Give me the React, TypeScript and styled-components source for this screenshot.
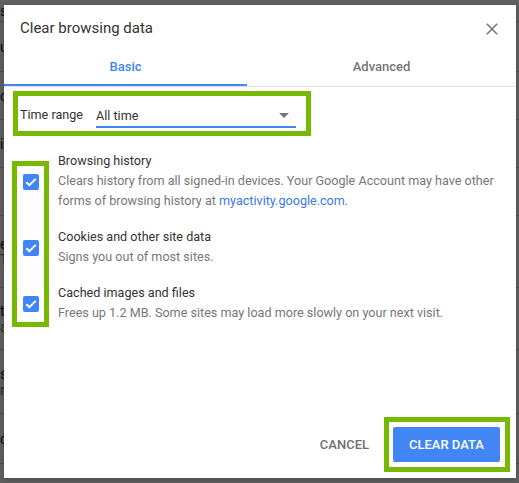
import React from "react";
import styled, { createGlobalStyle } from "styled-components";

const Global = createGlobalStyle`
  html, body { margin: 0; padding: 0; }
  body { background: #5c5c5c; font-family: Roboto, "Liberation Sans", Arial, sans-serif; }
`;

const Page = styled.div`
  position: relative;
  width: 519px;
  height: 483px;
  overflow: hidden;
  background: #fff;
`;

const Underlay = styled.div`
  display: flex;
  flex-direction: column;
`;

const UnderRow = styled.div<{ $h: number; $line?: boolean }>`
  height: ${(p) => p.$h}px;
  font-size: 14px;
  line-height: 16px;
  color: #222;
  display: flex;
  flex-direction: column;
  justify-content: center;
  border-bottom: ${(p) => (p.$line ? "1px solid #c8c8c8" : "none")};
  box-sizing: border-box;
  white-space: nowrap;
`;

const UnderSub = styled.span`
  color: #777;
`;

const Scrim = styled.div`
  position: absolute;
  inset: 0;
  background: rgba(0, 0, 0, 0.62);
`;

const Dialog = styled.div`
  position: absolute;
  left: 4px;
  top: 5px;
  width: 512px;
  height: 473px;
  background: #fff;
  display: flex;
  flex-direction: column;
  box-shadow: 0 2px 6px rgba(0, 0, 0, 0.25);
`;

const Header = styled.div`
  display: flex;
  align-items: center;
  justify-content: space-between;
  padding: 13px 16px 0 16px;
  height: 20px;
`;

const Title = styled.h1`
  margin: 0;
  font-size: 15px;
  line-height: 20px;
  font-weight: 400;
  color: #333;
`;

const CloseButton = styled.button`
  border: 0;
  background: none;
  padding: 0;
  width: 14px;
  height: 14px;
  display: flex;
  align-items: center;
  justify-content: center;
  margin-top: 2px;
  margin-right: 1px;
  cursor: pointer;
`;

const TabBar = styled.div`
  margin-top: 7px;
  display: grid;
  grid-template-columns: 243px 1fr;
  border-bottom: 1px solid #e2e2e2;
`;

const Tab = styled.div<{ $active?: boolean }>`
  height: 41px;
  box-sizing: border-box;
  padding-top: 4px;
  display: flex;
  align-items: center;
  justify-content: center;
  font-size: 13px;
  font-weight: 500;
  color: ${(p) => (p.$active ? "#4285f4" : "#757575")};
  border-bottom: 2px solid ${(p) => (p.$active ? "#4285f4" : "transparent")};
`;

const Body = styled.div`
  display: flex;
  flex-direction: column;
  padding-left: 8px;
`;

const Highlight = styled.div`
  border: 5px solid #76b900;
  box-sizing: border-box;
`;

const RangeBox = styled(Highlight)`
  margin-top: 4px;
  margin-left: 1px;
  width: 298px;
  height: 45px;
  display: flex;
  align-items: flex-end;
  padding: 0 10px 3px 2px;
`;

const RangeLabel = styled.span`
  font-size: 12.6px;
  line-height: 22px;
  margin-bottom: 2px;
  color: #333;
  white-space: nowrap;
`;

const Select = styled.div`
  margin-left: auto;
  width: 200px;
  height: 24px;
  box-sizing: border-box;
  border-bottom: 2px solid #4285f4;
  display: flex;
  align-items: center;
  justify-content: space-between;
  padding-right: 7px;
  font-size: 12.6px;
  color: #333;
`;

const Arrow = styled.span`
  width: 0;
  height: 0;
  border-left: 5px solid transparent;
  border-right: 5px solid transparent;
  border-top: 5px solid #757575;
`;

const Options = styled.div`
  margin-top: 15px;
  display: grid;
  grid-template-columns: 37px 1fr;
  column-gap: 9px;
  row-gap: 16px;
`;

const OptionsFrame = styled(Highlight)`
  grid-column: 1;
  grid-row: 1 / 4;
  margin-top: 10px;
  margin-bottom: -4px;
`;

const CheckBox = styled.span<{ $row: number }>`
  grid-column: 1;
  grid-row: ${(p) => p.$row};
  align-self: center;
  justify-self: center;
  margin-top: 1px;
  width: 16px;
  height: 16px;
  border-radius: 2px;
  background: #4285f4;
  display: flex;
  align-items: center;
  justify-content: center;
`;

const OptionText = styled.div<{ $row: number }>`
  grid-column: 2;
  grid-row: ${(p) => p.$row};
  font-size: 12.6px;
  line-height: 20px;
  padding-right: 12px;
`;

const OptionTitle = styled.div`
  color: #333;
`;

const OptionDesc = styled.div`
  color: #777;
`;

const Link = styled.a`
  color: #3b78e7;
  text-decoration: none;
`;

const Footer = styled.div`
  margin-top: auto;
  display: flex;
  justify-content: flex-end;
  align-items: center;
  padding: 0 6px 6px 0;
`;

const TextButton = styled.button`
  border: 0;
  background: none;
  font-family: inherit;
  font-size: 13px;
  font-weight: 500;
  color: #6f6f6f;
  padding: 0 15px;
  height: 35px;
`;

const ButtonFrame = styled(Highlight)`
  padding: 5px 5px 5px 4px;
`;

const PrimaryButton = styled.button`
  border: 0;
  border-radius: 2px;
  background: #4285f4;
  color: #fff;
  font-family: inherit;
  font-size: 13px;
  font-weight: 500;
  height: 35px;
  width: 107px;
  padding: 0;
`;

const Check = () => (
  <svg width="12" height="10" viewBox="0 0 12 10">
    <path d="M1.3 5.2 L4.4 8.2 L10.7 1.9" fill="none" stroke="#fff" strokeWidth="2" />
  </svg>
);

const underRows: { h: number; t: string; s?: string; line?: boolean }[] = [
  { h: 22, t: "s", line: true },
  { h: 50, t: "u", line: true },
  { h: 48, t: "o", line: true },
  { h: 48, t: "i", line: true },
  { h: 48, t: "", line: true },
  { h: 72, t: "e", s: "T", line: true },
  { h: 62, t: "t", s: "a", line: true },
  { h: 64, t: "s", s: "r", line: true },
  { h: 50, t: "c", line: true },
  { h: 30, t: "" },
];

export default function App() {
  return (
    <>
      <Global />
      <Page>
        <Underlay>
          {underRows.map((r, i) => (
            <UnderRow key={i} $h={r.h} $line={r.line}>
              <span>{r.t}</span>
              {r.s ? <UnderSub>{r.s}</UnderSub> : null}
            </UnderRow>
          ))}
        </Underlay>
        <Scrim />
        <Dialog>
          <Header>
            <Title>Clear browsing data</Title>
            <CloseButton aria-label="Close">
              <svg width="12" height="12" viewBox="0 0 12 12">
                <path d="M0.8 0.8 L11.2 11.2 M11.2 0.8 L0.8 11.2" stroke="#777" strokeWidth="1.6" />
              </svg>
            </CloseButton>
          </Header>
          <TabBar>
            <Tab $active>Basic</Tab>
            <Tab>Advanced</Tab>
          </TabBar>
          <Body>
            <RangeBox>
              <RangeLabel>Time range</RangeLabel>
              <Select>
                <span>All time</span>
                <Arrow />
              </Select>
            </RangeBox>
            <Options>
              <OptionsFrame />
              <CheckBox $row={1}><Check /></CheckBox>
              <OptionText $row={1}>
                <OptionTitle>Browsing history</OptionTitle>
                <OptionDesc>
                  Clears history from all signed-in devices. Your Google Account may have other forms of browsing
                  history at <Link>myactivity.google.com</Link>.
                </OptionDesc>
              </OptionText>
              <CheckBox $row={2}><Check /></CheckBox>
              <OptionText $row={2}>
                <OptionTitle>Cookies and other site data</OptionTitle>
                <OptionDesc>Signs you out of most sites.</OptionDesc>
              </OptionText>
              <CheckBox $row={3}><Check /></CheckBox>
              <OptionText $row={3}>
                <OptionTitle>Cached images and files</OptionTitle>
                <OptionDesc>Frees up 1.2 MB. Some sites may load more slowly on your next visit.</OptionDesc>
              </OptionText>
            </Options>
          </Body>
          <Footer>
            <TextButton>CANCEL</TextButton>
            <ButtonFrame>
              <PrimaryButton>CLEAR DATA</PrimaryButton>
            </ButtonFrame>
          </Footer>
        </Dialog>
      </Page>
    </>
  );
}
